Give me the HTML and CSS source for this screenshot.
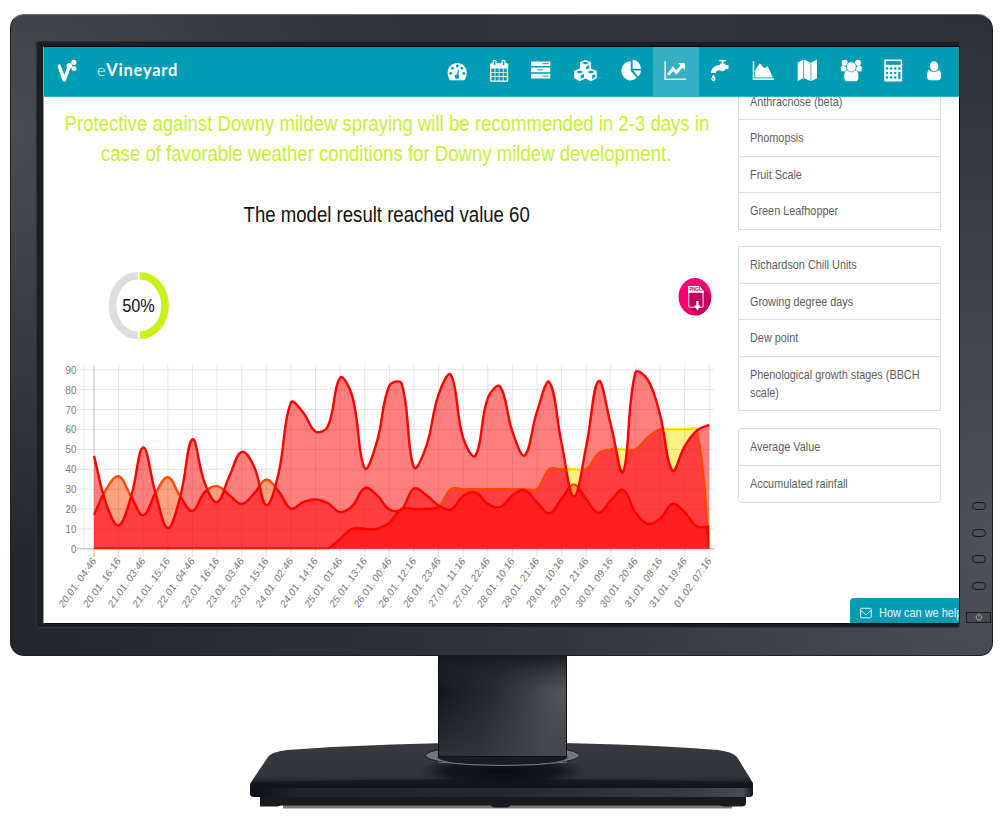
FILE: index.html
```html
<!DOCTYPE html>
<html lang="en">
<head>
<meta charset="utf-8">
<title>eVineyard</title>
<link rel="stylesheet" href="styles.css">
</head>
<body>
<div class="monitor">
  <div class="frame">
    <div class="screen">
      <header class="topbar">
        <div class="brand">
          <svg class="logo" viewBox="56 58 24 26"><path d="M60.3 66.2L64.9 79.5Q65.2 80.4 65.6 79.5L69.6 68" fill="none" stroke="#fff" stroke-width="3.5" stroke-linecap="round" stroke-linejoin="round"/><g fill="#fff"><circle cx="70.3" cy="65.8" r="2.8"/><circle cx="74.9" cy="62.3" r="2.6"/><circle cx="75" cy="68.4" r="2.5"/></g></svg>
          <span class="brand-name">e<b>Vineyard</b></span>
        </div>
        <nav class="nav">
          <a><svg viewBox="0 0 24 24"><path class="w" d="M4.9 21.2C3.5 19 2.7 16 2.7 13.5C2.7 8 7 3.9 12.2 3.9S21.7 8 21.7 13.5C21.7 16 20.9 19 19.5 21.2Z"/><g class="t"><circle cx="5.7" cy="14.3" r="1.4"/><circle cx="7.5" cy="9.3" r="1.4"/><circle cx="12.2" cy="7" r="1.4"/><circle cx="16.9" cy="9.3" r="1.4"/><circle cx="18.8" cy="14.3" r="1.4"/><circle cx="12" cy="17.6" r="2.3"/></g><path d="M12.2 17L13.6 11" stroke="#009cb5" stroke-width="1.2"/></svg></a>
          <a><svg viewBox="0 0 24 24"><path class="w" d="M4 4.2H20.2Q21.2 4.2 21.2 5.2V21.8Q21.2 22.8 20.2 22.8H4Q3 22.8 3 21.8V5.2Q3 4.2 4 4.2Z"/><path class="t" d="M4.4 9.6h3.2v3.3h-3.2zM8.4 9.6h3.3v3.3h-3.3zM12.5 9.6h3.3v3.3h-3.3zM16.6 9.6h3.2v3.3h-3.2zM4.4 13.8h3.2v3.3h-3.2zM8.4 13.8h3.3v3.3h-3.3zM12.5 13.8h3.3v3.3h-3.3zM16.6 13.8h3.2v3.3h-3.2zM4.4 18h3.2v3.4h-3.2zM8.4 18h3.3v3.4h-3.3zM12.5 18h3.3v3.4h-3.3zM16.6 18h3.2v3.4h-3.2z"/><g fill="#009cb5" stroke="#fff" stroke-width="1.2"><rect x="6.2" y="1.4" width="2.8" height="5.4" rx="1.2"/><rect x="15.2" y="1.4" width="2.8" height="5.4" rx="1.2"/></g></svg></a>
          <a><svg viewBox="0 0 24 24"><g class="w"><rect x="2" y="2.4" width="19.3" height="4.7" rx=".6"/><rect x="2" y="8.6" width="19.3" height="4.7" rx=".6"/><rect x="2" y="14.8" width="19.3" height="4.7" rx=".6"/></g><path d="M13.5 4.7h6M8.5 10.9h5.5M13.5 17.1h6" stroke="#009cb5" stroke-width="1"/></svg></a>
          <a><svg viewBox="0 0 24 24"><path class="w" d="M12.4 .9L17.9 3.1V9.4L23.7 12V19L18 22.2L12.4 19.6L6.7 22.2L1 19V12L6.9 9.4V3.1Z"/><path d="M8.8 4L12.4 5.5L16 4L12.4 2.6ZM13.3 7.2V10.5L16.3 9.2V5.9ZM3 13L6.7 14.5L10.4 13L6.7 11.5ZM7.7 16.5V19.9L11 18.3V15ZM14.3 13L18 14.5L21.7 13L18 11.5ZM19 16.5V19.9L22.3 18.1V15Z" fill="#009cb5"/></svg></a>
          <a><svg viewBox="0 0 24 24"><path class="w" d="M11.8 2.2V12L17.8 18.6A9 9.6 0 1 1 11.8 2.2ZM13.6 .8A8.8 9.4 0 0 1 22 9.8H13.6ZM14.3 11.6H22.2A9 9.6 0 0 1 19.2 17.6Z"/></svg></a>
          <a class="active"><svg viewBox="0 0 24 24"><path d="M1.1 2.3V20.3H22" fill="none" stroke="#d9f0f4" stroke-width="1.6"/><path d="M4 15.8L9 9.8L12.5 13.6L18.6 6.3" fill="none" stroke="#fff" stroke-width="3"/><path class="w" d="M14.3 4.1H20.9V11Z"/></svg></a>
          <a><svg viewBox="0 0 24 24"><path class="w" d="M11.2 1.6Q11.2 .5 12.4 .7L14.6 1L16.8 .7Q18 .5 18 1.6T16.8 2.5L15.5 2.3V4.6H16.6Q17.2 5.9 18.4 5.9H20.5V10H17.7Q16.6 12.2 14.4 12.2Q12.6 12.2 11.6 11.2Q8.2 10.7 7.8 14H3Q3.1 6.6 11.6 5.9Q12 4.6 12.8 4.6H13.7V2.3L12.4 2.5Q11.2 2.8 11.2 1.6ZM5.4 15.4Q7.9 18.9 7.7 20Q7.4 21.9 5.5 21.9Q3.4 21.9 3.3 20Q3.1 18.9 5.4 15.4Z"/><circle class="t" cx="4.9" cy="19.9" r=".7"/></svg></a>
          <a><svg viewBox="0 0 24 24"><path d="M2.5 2.2V20.1H23" fill="none" stroke="#d9f0f4" stroke-width="1.6"/><path class="w" d="M4.2 18.5V11.2L8.8 4.2L13.4 9.3L16.7 6.9L21.8 18.5Z"/></svg></a>
          <a><svg viewBox="0 0 24 24"><path class="w" d="M2.7 3.4L8.2 .6V19.2L2.7 22ZM8.9 .6L15.6 3.6V22L8.9 19.2ZM16.3 3.4L22 .6V19.2L16.3 22Z"/></svg></a>
          <a><svg viewBox="0 0 24 24"><g class="w"><circle cx="5.7" cy="3.8" r="3"/><circle cx="18.9" cy="3.8" r="3"/><path d="M4.4 6.5Q1.8 6.3 1.8 9.3V11Q1.8 12.6 3.6 12.6H8V8.5ZM20.2 6.5Q22.8 6.3 22.8 9.3V11Q22.8 12.6 21 12.6H16.6V8.5Z"/></g><g class="w" stroke="#009cb5" stroke-width=".7"><path d="M8.6 10.9Q4.8 11 4.8 17.6Q4.8 22.6 8.2 22.6H16.4Q19.8 22.6 19.8 17.6Q19.8 11 16 10.9Z"/><ellipse cx="12.3" cy="7.8" rx="4.9" ry="5.1"/></g></svg></a>
          <a><svg viewBox="0 0 24 24"><rect class="w" x="3.2" y=".6" width="18" height="22" rx="1.2"/><path class="t" d="M4.8 2.1h14.8v3.7h-14.8z"/><g class="t"><circle cx="6" cy="9.6" r="1.25"/><circle cx="10.1" cy="9.6" r="1.25"/><circle cx="14.2" cy="9.6" r="1.25"/><circle cx="18.3" cy="9.6" r="1.25"/><circle cx="6" cy="14" r="1.25"/><circle cx="10.1" cy="14" r="1.25"/><circle cx="14.2" cy="14" r="1.25"/><circle cx="6" cy="18.6" r="1.25"/><circle cx="10.1" cy="18.6" r="1.25"/><circle cx="14.2" cy="18.6" r="1.25"/><rect x="17.2" y="12.8" width="2.3" height="7.2" rx="1.1"/></g></svg></a>
          <a><svg viewBox="0 0 24 24"><path class="w" d="M7.3 11Q5 11.5 5 16.5Q5 21.2 8.4 21.2H15.8Q19.1 21.2 19.1 16.5Q19.1 11.5 16.8 11Q12 15 7.3 11Z"/><ellipse class="w" cx="12.1" cy="7.2" rx="4.3" ry="5"/></svg></a>
        </nav>
      </header>
      <div class="main">
        <main class="content">
          <h3 class="advice"><span class="narrow">Protective against Downy mildew spraying will be recommended in 2-3 days in</span><span class="narrow">case of favorable weather conditions for Downy mildew development.</span></h3>
          <h3 class="result"><span class="narrow">The model result reached value 60</span></h3>
          <div class="tools">
            <div class="gauge">
              <svg viewBox="0 0 60 69"><path d="M28.9 4.7A25.4 29.8 0 0 0 28.9 64.3" fill="none" stroke="#ddd" stroke-width="7.6"/><path d="M30.7 4.7A25.4 29.8 0 0 1 30.7 64.3" fill="none" stroke="#c6f21a" stroke-width="7.6"/></svg>
              <span class="narrow">50%</span>
            </div>
            <svg class="png" viewBox="678 278 34 38"><defs><clipPath id="disc"><ellipse cx="694.9" cy="296.8" rx="16.4" ry="18.8"/></clipPath></defs><g clip-path="url(#disc)"><path d="M678 278h34v38h-34z" fill="#fb0071"/><path d="M688 307L701 286L712 297V316H697Z" fill="#c2005d"/><path d="M689 293h14v14h-14z" fill="#c2005d"/></g><path d="M688.8 286.3V306Q688.8 307.2 690 307.2H702Q703.1 307.2 703.1 306V290.5" fill="none" stroke="#ffd7ea" stroke-width="1.1"/><path d="M688.3 285.9H699.6L703.6 290.4V292.8H688.3Z" fill="#fff"/><path d="M699.4 285.9V290.2H703.5" fill="none" stroke="#fb0071" stroke-width=".8"/><text x="689.4" y="291.2" class="png-label" textLength="9.4">PNG</text><path d="M696.2 301H698.6V305.6H700.6L697.4 310.6L694.2 305.6H696.2Z" fill="#fff"/></svg>
          </div>
          <svg class="chart" id="chart" viewBox="44 360 685 263"></svg>
        </main>
        <aside class="side">
          <ul class="list first"><li><span class="narrow">Anthracnose (beta)</span></li><li><span class="narrow">Phomopsis</span></li><li><span class="narrow">Fruit Scale</span></li><li><span class="narrow">Green Leafhopper</span></li></ul>
          <ul class="list"><li><span class="narrow">Richardson Chill Units</span></li><li><span class="narrow">Growing degree days</span></li><li><span class="narrow">Dew point</span></li><li class="tall"><span class="narrow">Phenological growth stages (BBCH<br>scale)</span></li></ul>
          <ul class="list last"><li><span class="narrow">Average Value</span></li><li><span class="narrow">Accumulated rainfall</span></li></ul>
        </aside>
      </div>
      <div class="help"><svg viewBox="0 0 12 12"><path d="M.6 2.3Q.6 1.3 1.5 1.3H10.3Q11.3 1.3 11.3 2.3V9.8Q11.3 10.8 10.3 10.8H1.5Q.6 10.8 .6 9.8ZM.8 3.2L5.2 7.2Q6 7.9 6.8 7.2L11.2 3.2" fill="none" stroke="#e4f6f8" stroke-width="1"/></svg><span class="narrow">How can we help</span></div>
    </div>
  </div>
  <div class="buttons"><i></i><i></i><i></i><i></i><div class="power"><svg viewBox="0 0 8 8"><path d="M2.6 1.8A2.8 2.8 0 1 0 5.4 1.8M4 .4V3.8" fill="none" stroke="#b5b6ba" stroke-width=".9"/></svg></div></div>
</div>
<svg class="stand" viewBox="0 656 1000 163">
  <defs>
    <linearGradient id="neck" x1="0" y1="0" x2="1" y2=".25"><stop offset="0" stop-color="#111318"/><stop offset=".5" stop-color="#282a2f"/><stop offset="1" stop-color="#55565c"/></linearGradient>
    <linearGradient id="neckfade" x1="0" y1="0" x2="0" y2="1"><stop offset="0" stop-color="#16181d" stop-opacity=".9"/><stop offset=".35" stop-color="#303238" stop-opacity="0"/><stop offset="1" stop-color="#3a3b42" stop-opacity=".6"/></linearGradient>
    <linearGradient id="top" x1="0" y1="0" x2="0" y2="1"><stop offset="0" stop-color="#373a3e"/><stop offset=".75" stop-color="#30333a"/><stop offset="1" stop-color="#10131b"/></linearGradient>
    <linearGradient id="edge"><stop offset="0" stop-color="#0d1018"/><stop offset=".1" stop-color="#22242b"/><stop offset=".5" stop-color="#26272e"/><stop offset=".9" stop-color="#3c3d43"/><stop offset=".98" stop-color="#4b4c52"/><stop offset="1" stop-color="#111319"/></linearGradient>
    <radialGradient id="shade"><stop offset="0" stop-color="#090b12"/><stop offset=".65" stop-color="#0f1118" stop-opacity=".85"/><stop offset="1" stop-color="#111319" stop-opacity="0"/></radialGradient>
  </defs>
  <path d="M283 804H732V808.5H283Z" fill="#77787a"/>
  <path d="M260 796H746V803Q746 806.5 741 806.5H724L719 805.5H511L507 807.5H494L490 805.5H282L277 806.5H260Z" fill="#181a20"/>
  <path d="M250 784H753V794Q753 797 749 797H254Q250 797 250 794Z" fill="url(#edge)"/>
  <path d="M250.5 783L268 757Q271 752 287 750Q390 742.5 502 742.5Q620 742.5 718 750Q733 752 737 757L753 783V788H250V785Z" fill="url(#top)"/>
  <ellipse cx="502" cy="771" rx="84" ry="16" fill="url(#shade)"/>
  <path d="M252 782Q502 776 752 782V787H252Z" fill="#10131b" opacity=".6"/>
  <ellipse cx="502.5" cy="755.5" rx="77" ry="10.5" fill="#73757a" stroke="#15171b"/>
  <ellipse cx="502.5" cy="757" rx="65" ry="8.5" fill="#171c24"/>
  <path d="M438 762Q502 769 567 762" fill="none" stroke="#7b8791" stroke-width=".9"/>
  <path d="M438 656H567V757H438Z" fill="url(#neck)"/><path d="M438 656H567V757H438Z" fill="url(#neckfade)"/>
  <path d="M438.5 656V756.5H566.5V656" fill="none" stroke="#101116"/>
</svg>
<script src="chart.js"></script>
</body>
</html>
```
FILE: styles.css
```css
* { box-sizing: border-box; }
body { margin: 0; width: 1000px; height: 819px; overflow: hidden; background: #fff; font-family: "Liberation Sans", Arial, sans-serif; padding-top: 14px; }
.monitor { width: 983px; height: 642px; margin-left: 9.5px; border-radius: 14px 15px 13px 14px; display: flex; padding: 26px 0 26px 25.5px; border: 1px solid #202127; border-top-color: #6b6c6e;
  background:
    radial-gradient(ellipse 440px 430px at 0 18%, rgba(76,78,83,.95), rgba(66,67,73,.7) 50%, transparent),
    radial-gradient(ellipse 460px 560px at 100% 82%, rgba(82,83,88,.95), rgba(72,73,79,.7) 50%, transparent),
    linear-gradient(90deg, #24262c, #33353b 60%, #2c2d33); }
.frame { width: 924.5px; height: 587px; padding: 5px 0 0 7px; border-radius: 3px; background: #1b1d25; box-shadow: inset 1px 1px 1px #303239, inset -1px -1px 1px #393a40, 0 0 1px #3f4046; }
.screen { width: 917px; height: 578px; border: 1px solid #050608; border-left-color: #9b9ca0; background: #fff; display: flex; flex-direction: column; overflow: hidden; position: relative; }
.narrow { display: inline-block; white-space: nowrap; transform: scaleX(.865); transform-origin: 0 50%; }
.topbar { height: 50px; flex: none; background: #009cb5; border-bottom: 1px solid #34b0c4; display: flex; justify-content: space-between; position: relative; z-index: 1; }
.brand { display: flex; padding: 11px 0 0 12px; gap: 17px; }
.logo { width: 24px; height: 26px; margin-left: -1px; margin-right: 1px; }
.brand-name { font: 300 16.5px/24px Lato, sans-serif; color: #fff; letter-spacing: .75px; }
.brand-name b { font-weight: 700; }
.nav { display: grid; grid-template-columns: 42px 42px 42px 46px 45px 46px 42px 44px 44px 43px 42px 40px; padding-right: 5px; }
.nav a { display: flex; justify-content: center; padding-top: 12px; }
.nav svg { width: 24px; height: 24px; flex: none; }
.nav .active { background: #34b0c4; height: 50px; }
.w { fill: #fff; }
.t { fill: #009cb5; }
.main { display: flex; flex: 1; min-height: 0; }
.content { width: 685px; flex: none; display: flex; flex-direction: column; padding-top: 11.6px; }
h3 { margin: 0; font-size: 21.4px; font-weight: 400; line-height: 30.5px; display: flex; flex-direction: column; align-items: center; }
h3 .narrow { transform: scaleX(.869); transform-origin: 50% 50%; }
.advice { color: #c6f032; }
.result { color: #111; margin-top: 30px; }
.tools { margin-top: 40.5px; height: 89.4px; display: flex; justify-content: space-between; padding: 0 17px 0 65px; flex: none; }
.gauge { width: 60px; height: 69px; display: grid; place-items: center; }
.gauge > * { grid-area: 1 / 1; }
.gauge svg { width: 60px; height: 69px; }
.gauge .narrow { font-size: 18.5px; transform: scaleX(.88); transform-origin: 50% 50%; color: #111; padding-top: 1px; }
.png { width: 34px; height: 38px; margin-top: 7px; }
.png-label { font: bold 4.6px "Liberation Sans", sans-serif; fill: #d80066; }
.chart { width: 685px; height: 263px; flex: none; }
.chart text { font: 11px "Liberation Sans", Arial, sans-serif; fill: #777; text-anchor: end; }
.chart .tick { font-size: 11.6px; }
.side { width: 203px; margin-left: 9px; margin-top: -14.4px; flex: none; }
.list { list-style: none; margin: 0 0 16.8px; padding: 0; border: 1px solid #ddd; border-bottom: 0; font-size: 13px; color: #5e5e5e; }
.list .narrow { transform: scaleX(.835); }
.list li { height: 36.5px; padding: 8.9px 11px 0; line-height: 18px; border-bottom: 1px solid #ddd; }
.list .tall { height: 54.5px; }
.list.last { border-radius: 3px 3px 4px 4px; border-bottom: 1px solid #ddd; }
.list.last li:last-child { border-bottom: 0; height: 36px; }
.help { position: absolute; left: 806px; top: 551px; width: 120px; height: 30px; background: #009cb5; border-radius: 4px 0 0 0; color: #e8f8fa; font-size: 13.2px; line-height: 30px; display: flex; gap: 7px; padding-left: 10px; }
.help svg { width: 12px; height: 12px; margin-top: 9px; flex: none; }
.help .narrow { transform: scaleX(.83); }
.buttons { width: 30px; margin-left: 3.5px; padding-top: 461px; display: flex; flex-direction: column; align-items: center; gap: 18.7px; flex: none; }
.buttons i { width: 14px; height: 8px; border: 1.5px solid #17181c; border-radius: 4px; background: #505157; flex: none; }
.power { width: 25px; height: 11px; margin-top: 3px; border: 1px solid #1c1d21; background: #47484e; display: flex; justify-content: center; align-items: center; flex: none; }
.power svg { width: 8px; height: 8px; }
.stand { display: block; width: 1000px; height: 163px; }
```
FILE: chart.js
```js
const X0 = 94, STEP = 12.305, BASE = 548.8, UNIT = 1.989, TOP = 365;

const main = [46.7,22.5,11.7,26,51,28,10.5,26,55,33,23.5,36.5,48.7,41.5,22,38,73.5,68.5,59,61.5,86,76.5,40.5,54,82,83,41,51.5,77.5,87.5,55.6,46.8,75.7,81.6,59,47,69,83.8,53,26.3,51.4,84.3,62.3,38.7,88.6,85,67.4,39.4,51.5,59.5,62.3];
const second = [17,30,36.5,26.5,16.8,28,36,26.5,19,28.5,31.5,27,22.5,27.7,34.7,29,20.2,23.5,24.8,23,18.4,21.6,30.5,27,19.8,20,30.3,27,21.8,19.8,26.6,28.3,22.6,21,26.8,29.5,23.3,17.8,25.2,32.4,25,18,24.3,29.7,18.3,12.6,15,22.6,18.4,11.2,11.2];
const stairs = [...Array(20).fill(0),5,10,10,10,13,20,20,20,21,30,30,30,30,30,30,30,30,40,40,40,40,48,50,50,50,56,60,60,60,59.5,0];

const r = n => n.toFixed(2);
const clampY = y => Math.min(BASE, Math.max(TOP, y));

function curve(values) {
  const p = values.map((v, i) => [X0 + i * STEP, BASE - v * UNIT]);
  const ctl = p.map((c, i) => {
    const a = p[i - 1] || c, b = p[i + 1] || c;
    const d0 = Math.hypot(c[0] - a[0], c[1] - a[1]), d1 = Math.hypot(b[0] - c[0], b[1] - c[1]);
    const f0 = 0.4 * d0 / (d0 + d1), f1 = 0.4 * d1 / (d0 + d1);
    return {
      before: [c[0] - f0 * (b[0] - a[0]), clampY(c[1] - f0 * (b[1] - a[1]))],
      after: [c[0] + f1 * (b[0] - a[0]), clampY(c[1] + f1 * (b[1] - a[1]))]
    };
  });
  let d = `M${r(p[0][0])} ${r(p[0][1])}`;
  for (let i = 1; i < p.length; i++) {
    d += `C${[...ctl[i - 1].after, ...ctl[i].before, ...p[i]].map(r).join(" ")}`;
  }
  return d;
}

const A = curve(main), B = curve(second), C = curve(stairs);
const END = X0 + 50 * STEP;
const area = d => `${d}L${r(END)} ${BASE}L${X0} ${BASE}Z`;
const fill = (d, color, o = 0.5) => `<path d="${area(d)}" fill="${color}" fill-opacity="${o}"/>`;
const line = (d, color) => `<path d="${d}" fill="none" stroke="${color}" stroke-width="2.4" stroke-linejoin="round"/>`;

let grid = "", labels = "";
for (let v = 0; v <= 90; v += 10) {
  const y = r(BASE - v * UNIT);
  grid += `<path d="M77 ${y}H714.5" stroke="#000" stroke-opacity="${v ? 0.1 : 0.3}"/>`;
  labels += `<text class="tick" transform="translate(76.3 ${+y + 4}) scale(.84 1)">${v}</text>`;
}
grid += `<path d="M84 ${TOP}V${BASE}" stroke="#000" stroke-opacity=".08"/>`;
const dates = "20.01. 04:46|20.01. 16:16|21.01. 03:46|21.01. 15:16|22.01. 04:46|22.01. 16:16|23.01. 03:46|23.01. 15:16|24.01. 02:46|24.01. 14:16|25.01. 01:46|25.01. 13:16|26.01. 00:46|26.01. 12:16|26.01. 23:46|27.01. 11:16|27.01. 22:46|28.01. 10:16|28.01. 21:46|29.01. 10:16|29.01. 21:46|30.01. 09:16|30.01. 20:46|31.01. 08:16|31.01. 19:46|01.02. 07:16".split("|");
dates.forEach((t, i) => {
  const x = X0 + i * STEP * 2;
  grid += `<path d="M${r(x)} ${TOP}V557" stroke="#000" stroke-opacity="${i ? 0.1 : 0.24}"/>`;
  labels += `<text transform="translate(${r(x + 2.6)} 561.4) scale(.86 1) rotate(-50.5)">${t}</text>`;
});

document.getElementById("chart").innerHTML = `
  <defs>
    <clipPath id="inA"><path d="${area(A)}"/></clipPath>
    <clipPath id="inB"><path d="${area(B)}"/></clipPath>
  </defs>
  ${fill(C, "#ffe100")}${line(C, "#ffe600")}
  ${fill(B, "#ff4500")}${line(B, "#ff4a00")}
  ${fill(A, "#fff", 1)}
  ${grid}
  ${fill(A, "#f00")}
  <g clip-path="url(#inA)">
    ${fill(C, "#f00")}${line(C, "#ff4500")}
    ${fill(B, "#f00")}${line(B, "#f00")}
    <g clip-path="url(#inB)">${line(C, "#f00")}</g>
  </g>
  ${line(A, "#f00")}
  ${labels}`;
```
